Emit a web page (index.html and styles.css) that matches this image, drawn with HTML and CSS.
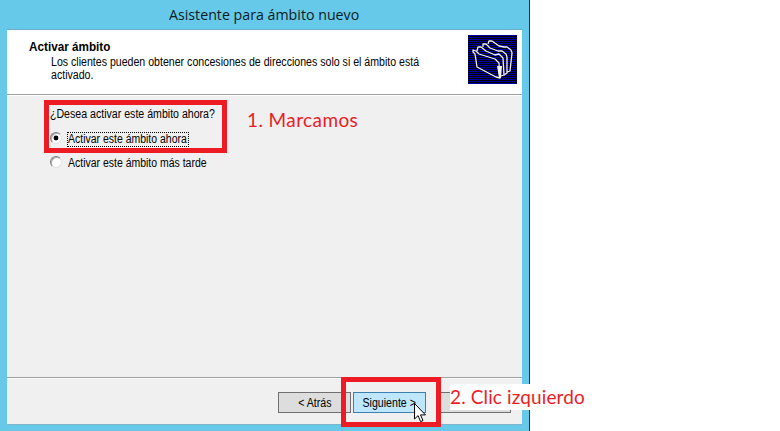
FILE: index.html
```html
<!DOCTYPE html>
<html lang="es">
<head>
<meta charset="utf-8">
<title>Asistente para ámbito nuevo</title>
<link rel="stylesheet" href="styles.css">
</head>
<body>
<main class="window">
  <h1 class="titlebar"><span>Asistente para ámbito nuevo</span></h1>
  <section class="dialog">
    <header class="header">
      <div class="heading">
        <h2><span>Activar ámbito</span></h2>
        <p><span>Los clientes pueden obtener concesiones de direcciones solo si el ámbito está<br>activado.</span></p>
      </div>
      <svg class="folders" width="49" height="49" viewBox="0 0 49 49">
        <defs><pattern id="dots" width="2" height="2" patternUnits="userSpaceOnUse"><rect width="2" height="2" fill="#000"/><rect width="1" height="1" fill="#0000a8"/></pattern></defs>
        <rect width="49" height="49" fill="url(#dots)"/>
        <g fill="none" stroke="#f4f4f4" stroke-width="1.3" stroke-linejoin="round">
          <path d="M20 9l1-3 3 0 7 5 5 1 3 0 4 3 1 3-2 18-3 1"/>
          <path d="M15 12l0-3 3 0 4 4 8 3 4 0 4 3 1 3 0 16-3 2"/>
          <path d="M9 16l1-4 3 0 5 4 9 4 4-1 4 4 1 17-3 1"/>
          <path d="M5 15l3 1 3 3 16 5 4 4 1 15-4-1-19-10-2-13-2-2z"/>
        </g>
        <path d="M29 31h5l-1 12h-2z" fill="#f4f4f4"/>
      </svg>
    </header>
    <form class="content">
      <fieldset>
        <legend><span>¿Desea activar este ámbito ahora?</span></legend>
        <label class="option"><i class="radio checked"></i><b class="focus"><span>Activar este ámbito ahora</span></b></label>
        <label class="option later"><i class="radio"></i><b><span>Activar este ámbito más tarde</span></b></label>
      </fieldset>
    </form>
    <footer class="footer">
      <button class="back" type="button"><span>&lt; Atrás</span></button>
      <button class="next" type="button"><span>Siguiente &gt;</span></button>
      <button class="cancel" type="button"></button>
    </footer>
  </section>
</main>
<div class="mark mark-option"></div>
<div class="mark mark-next"></div>
<div class="note note-one">1. Marcamos</div>
<div class="note note-two">2. Clic izquierdo</div>
<svg class="cursor" width="13" height="20" viewBox="0 0 13 20"><path d="M.5.5v15.5l3.6-3.4 2.5 6 2.4-1-2.5-5.7h5z" fill="#fff" stroke="#000"/></svg>
</body>
</html>
```
FILE: styles.css
```css
* { box-sizing: border-box; }
body {
  margin: 0;
  width: 780px;
  height: 431px;
  overflow: hidden;
  position: relative;
  background: #fff;
  color: #000;
  font: 12px/13px "Liberation Sans", sans-serif;
}
h1, h2, p, fieldset { margin: 0; padding: 0; border: 0; }
span {
  display: inline-block;
  white-space: nowrap;
  transform: scaleX(.883);
  transform-origin: left;
}
.window {
  width: 530px;
  height: 431px;
  padding: 0 7px;
  background: #66c9ea;
  border-right: 1px solid #20384a;
  display: flex;
  flex-direction: column;
}
.titlebar {
  height: 29px;
  padding-left: 162px;
  font: 15px/29px "Open Sans", sans-serif;
  color: #101c22;
}
.titlebar span { transform: scaleX(.947); }
.dialog {
  height: 396px;
  width: 515px;
  background: #f0f0f0;
  border-top: 1px solid #6fb0c8;
  border-bottom: 1px solid #7fb5c8;
  display: flex;
  flex-direction: column;
}
.header {
  height: 65px;
  background: #fff;
  border-bottom: 1px solid #a0a0a0;
  display: flex;
  justify-content: space-between;
  padding: 5px 5px 0 22px;
  box-shadow: 0 1px #fff;
}
.folders { flex: none; }
.heading { padding-top: 6px; width: 430px; }
h2 { font-size: 12px; line-height: 13px; }
h2 span { transform: scaleX(.977); }
.heading p { padding: 2px 0 0 22px; }
.content { height: 282px; padding: 13px 0 0 43px; }
legend { padding: 0; height: 13px; }
.option { display: flex; align-items: center; height: 14px; margin-top: 11px; gap: 4px; }
.option b { font-weight: normal; width: 122px; height: 15px; margin-left: 1px; border: 1px solid transparent; }
.option .focus { border: 1px dotted #000; }
.option span { transform: scaleX(.873); }
.later { margin-top: 10px; }
.radio {
  width: 12px;
  height: 12px;
  border-radius: 50%;
  border: 1px solid;
  border-color: #808080 #e3e3e3 #e3e3e3 #808080;
  background: #fff;
  box-shadow: inset 1px 1px #aaa;
  display: grid;
  place-items: center;
  position: relative;
  top: -1px;
}
.checked::after { content: ""; width: 4px; height: 4px; border-radius: 50%; background: #000; box-shadow: 0 0 0 .4px #000; }
.footer {
  flex: 1;
  border-top: 1px solid #a0a0a0;
  box-shadow: inset 0 1px #fff;
  display: flex;
  padding: 14px 0 0 271px;
}
button {
  width: 73px;
  height: 21px;
  padding: 2px 0 0;
  background: #ddd;
  border: 1px solid #707070;
  font: inherit;
  color: #000;
}
button span { transform-origin: center; }
.next { margin-left: 2px; background: #bee6fd; border-color: #3c7fb1; }
.cancel { margin-left: 12px; }
.mark { position: absolute; border: 5px solid #ed1c24; }
.mark-option { left: 44px; top: 100px; width: 183px; height: 53px; }
.mark-next { left: 341px; top: 377px; width: 100px; height: 50px; }
.note { position: absolute; color: #ed1c24; font: 19px/26px Lato, sans-serif; white-space: nowrap; }
.note-one { left: 247px; top: 107px; letter-spacing: .4px; }
.note-two { left: 450px; top: 384px; width: 142px; height: 26px; background: #fff; letter-spacing: .12px; }
.cursor { position: absolute; left: 414px; top: 403px; }
```
